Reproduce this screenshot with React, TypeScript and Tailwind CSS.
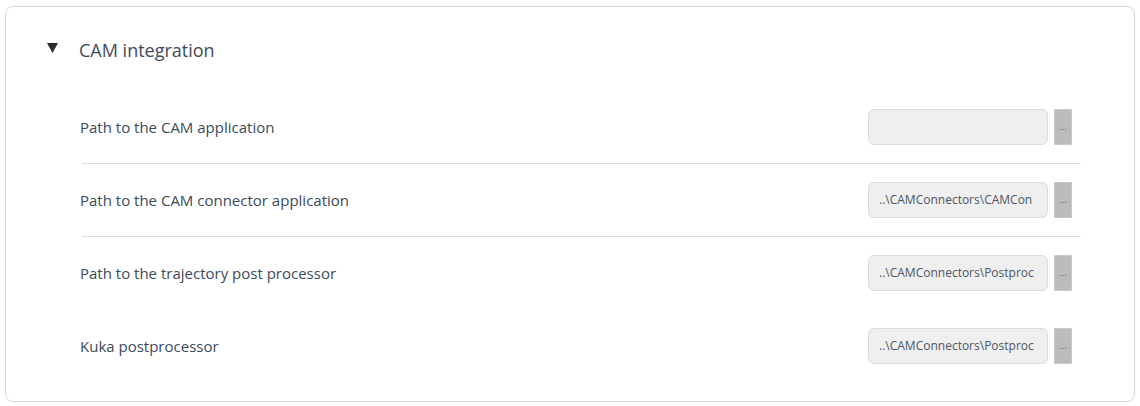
const rows = [
  { label: "Path to the CAM application", value: "", divider: true },
  { label: "Path to the CAM connector application", value: "..\\CAMConnectors\\CAMCon", divider: true },
  { label: "Path to the trajectory post processor", value: "..\\CAMConnectors\\Postproc", divider: false },
  { label: "Kuka postprocessor", value: "..\\CAMConnectors\\Postproc", divider: false },
];

function PathRow({ label, value, divider }: { label: string; value: string; divider: boolean }) {
  return (
    <div
      className={
        "flex items-center h-[73px] border-b " + (divider ? "border-[#dcdcdc]" : "border-transparent")
      }
    >
      <span className="flex-1 -ml-[2px] text-[15px] text-[#3d4a5a]">{label}</span>
      <div className="flex items-center gap-[6px] mr-[9px] -mt-px">
        <div className="w-[180px] h-[36px] rounded-[6px] border border-[#dcdcdc] bg-[#efefef] pl-[10px] pr-[8px] flex items-center">
          <span className="block w-full overflow-hidden text-[12px] text-[#4a5666] whitespace-nowrap">{value}</span>
        </div>
        <button className="w-[18px] h-[36px] bg-[#bcbcbc] border border-[#c8c8c8] rounded-[1px] flex items-center justify-center text-[9px] leading-none text-[#5f5f5f]">
          ...
        </button>
      </div>
    </div>
  );
}

export default function App() {
  return (
    <div className="w-[1140px] h-[406px] bg-white pt-[6px] pl-[5px] font-['Open_Sans',sans-serif]">
      <div className="w-[1130px] h-[396px] rounded-[8px] border border-[#d6d6d6] bg-white">
        <div className="flex items-center h-[28px] mt-[29px] pl-[41px]">
          <svg width="11" height="10" viewBox="0 0 11 10" className="-mt-[4px]">
            <polygon points="0,0 11,0 5.5,10" fill="#2b2b2b" />
          </svg>
          <span className="ml-[21px] text-[18px] text-[#3d4a5a]">CAM integration</span>
        </div>
        <div className="mt-[27px] ml-[76px] mr-[53px]">
          {rows.map((r) => (
            <PathRow key={r.label} {...r} />
          ))}
        </div>
      </div>
    </div>
  );
}
